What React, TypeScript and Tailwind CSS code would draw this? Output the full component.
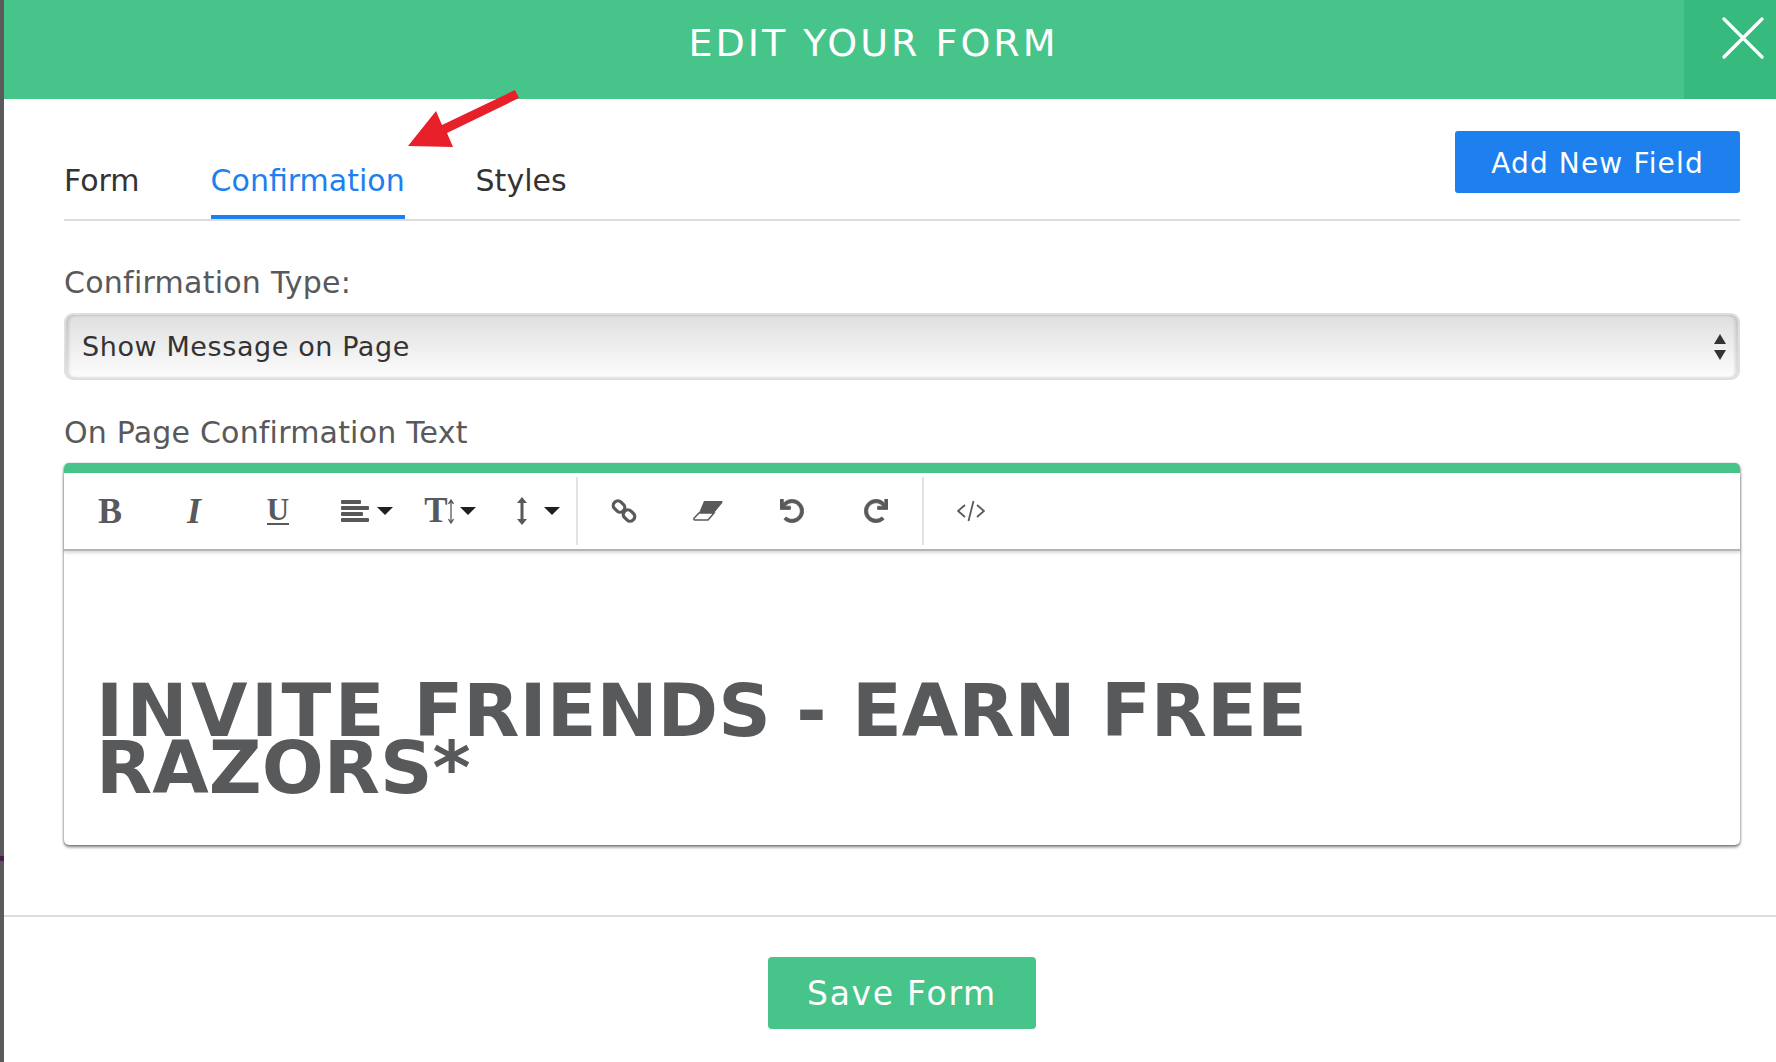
import { FaUndo, FaRedo } from "react-icons/fa";

const Caret = () => (
  <svg width="16" height="8" viewBox="0 0 16 8" className="shrink-0">
    <path d="M0 0h16L8 8z" fill="#1f1f1f" />
  </svg>
);

const ToolButton = ({ children, className = "" }: { children: React.ReactNode; className?: string }) => (
  <div className={`w-[84px] h-full flex items-center justify-center text-[#58595b] ${className}`}>{children}</div>
);

const Divider = ({ className = "" }: { className?: string }) => <div className={`w-[2px] h-[68px] bg-[#e3e3e3] ${className}`} />;

export default function App() {
  return (
    <div className="relative w-[1776px] h-[1062px] flex bg-white overflow-hidden font-['DejaVu_Sans',sans-serif]">
      <div className="relative w-1 shrink-0 bg-[#5a5a5c]">
        <div className="absolute left-0 top-[856px] w-1 h-[5px] bg-[#4a1d4a]" />
      </div>

      <div className="flex-1 min-w-0 flex flex-col">
        <header className="h-[99px] shrink-0 flex bg-[#47c489]">
          <h1 className="flex-1 pl-[59px] pt-[20px] text-center text-white text-[38px] leading-[46px] tracking-[3px]">
            EDIT YOUR FORM
          </h1>
          <button className="w-[92px] flex justify-center pt-[17px] pl-[26px] bg-[#36ba7e]">
            <svg width="42" height="42" viewBox="0 0 42 42">
              <path d="M2 2l38 38M40 2L2 40" stroke="#fff" strokeWidth="3.2" strokeLinecap="round" />
            </svg>
          </button>
        </header>

        <main className="flex-1 pl-[60px] pr-[36px]">
          <div className="h-[122px] flex justify-between border-b-2 border-[#dcdcdc]">
            <nav className="flex items-end gap-[71px] text-[30px] text-[#333]">
              <span className="pb-[16px] leading-[36px] border-b-4 border-transparent">Form</span>
              <span className="pb-[16px] leading-[36px] text-[#1e7fee] border-b-4 border-[#1e7fee] w-[194px]">Confirmation</span>
              <span className="pb-[16px] leading-[36px] border-b-4 border-transparent">Styles</span>
            </nav>
            <button className="mt-[32px] w-[285px] h-[62px] pt-[4px] rounded-[3px] bg-[#1e7fee] text-white text-[28px] tracking-[1.15px]">
              Add New Field
            </button>
          </div>

          <label className="block mt-[44px] text-[30px] leading-[36px] tracking-[0.25px] text-[#58595b]">Confirmation Type:</label>
          <div className="mt-[12px] h-[67px] flex items-center justify-between pl-[16px] pr-[11px] pt-[1px] rounded-[9px] border-2 border-[#dfdfdf] bg-gradient-to-b from-[#dfdfdf] to-[#fdfdfd] shadow-[inset_3px_0_3px_rgba(0,0,0,0.12),inset_-3px_0_3px_rgba(0,0,0,0.12)] text-[27px] tracking-[0.6px] text-[#333]">
            <span>Show Message on Page</span>
            <svg width="14" height="26" viewBox="0 0 14 26">
              <path d="M7 0l6 10H1zM7 26l6-10H1z" fill="#333" />
            </svg>
          </div>

          <label className="block mt-[35px] text-[30px] leading-[36px] tracking-[0.2px] text-[#58595b]">On Page Confirmation Text</label>
          <div className="mt-[12px] h-[382px] flex flex-col rounded-[5px] border-t-[10px] border-[#47c489] shadow-[0_1px_3px_rgba(0,0,0,0.55),0_3px_3px_rgba(0,0,0,0.2)]">
            <div className="h-[78px] shrink-0 flex items-center pl-[4px] border-b-2 border-[#b5b5b5] shadow-[0_2px_3px_rgba(0,0,0,0.15)]">
              <ToolButton className="font-['Liberation_Serif',serif] font-bold text-[36px]">B</ToolButton>
              <ToolButton className="font-['Liberation_Serif',serif] font-bold italic text-[36px]">I</ToolButton>
              <ToolButton className="font-['Liberation_Serif',serif] font-bold">
                <span className="text-[31px] leading-[26px] border-b-2 border-[#58595b]">U</span>
              </ToolButton>
              <ToolButton className="gap-[8px] pl-[10px]">
                <svg width="28" height="22" viewBox="0 0 28 22" fill="#58595b">
                  <rect x="0" y="0" width="20" height="4" rx="1" />
                  <rect x="0" y="6" width="28" height="4" rx="1" />
                  <rect x="0" y="12" width="22" height="4" rx="1" />
                  <rect x="0" y="18" width="28" height="4" rx="1" />
                </svg>
                <Caret />
              </ToolButton>
              <ToolButton className="gap-[6px] pl-[8px]">
                <span className="flex items-center">
                  <span className="font-['Liberation_Serif',serif] font-bold text-[35px] leading-[26px]">T</span>
                  <svg width="6" height="25" viewBox="0 0 6 25">
                    <path d="M3 1v23M0.500 5L3 1l2.500 4M0.500 20L3 24l2.500-4" fill="none" stroke="#58595b" strokeWidth="1.300" />
                  </svg>
                </span>
                <Caret />
              </ToolButton>
              <ToolButton className="gap-[17px] pl-[16px]">
                <svg width="10" height="28" viewBox="0 0 10 28">
                  <path d="M5 0l5 6H6.500v16H10l-5 6-5-6h3.500V6H0z" fill="#58595b" />
                </svg>
                <Caret />
              </ToolButton>
              <Divider className="ml-[4px]" />
              <ToolButton className="ml-[4px]">
                <svg width="26" height="26" viewBox="0 0 26 26" fill="none" stroke="#58595b" strokeWidth="3.200">
                  <rect x="2" y="4" width="12" height="9" rx="4" transform="rotate(45 8 8.500)" />
                  <rect x="12" y="13" width="12" height="9" rx="4" transform="rotate(45 18 17.500)" />
                </svg>
              </ToolButton>
              <ToolButton>
                <svg width="30" height="20" viewBox="0 0 30 20">
                  <path d="M11 0h17c1.500 0 2 1 1.200 2L21 12H6z" fill="#58595b" />
                  <path d="M6 12h15l-6 7H2c-1 0-1.500-1-.8-2z" fill="none" stroke="#58595b" strokeWidth="1.500" />
                </svg>
              </ToolButton>
              <ToolButton>
                <FaUndo size={24} stroke="currentColor" strokeWidth={16} />
              </ToolButton>
              <ToolButton>
                <FaRedo size={24} stroke="currentColor" strokeWidth={16} />
              </ToolButton>
              <Divider className="ml-[4px]" />
              <ToolButton className="pl-[10px]">
                <svg width="28" height="22" viewBox="0 0 28 22" fill="none" stroke="#58595b" strokeWidth="1.800">
                  <path d="M8 5l-7 6 7 6M20 5l7 6-7 6M16.500 1l-5 20" />
                </svg>
              </ToolButton>
            </div>
            <div className="flex-1 pl-[32px] pt-[131px] text-[#58595b] font-bold text-[73px] leading-[57px]">
              <span className="tracking-[3.400px]">INVITE</span> FRIENDS - EARN FREE
              <br />
              RAZORS*
            </div>
          </div>
        </main>

        <footer className="h-[147px] shrink-0 flex justify-center border-t-2 border-[#dcdcdc] pt-[40px]">
          <button className="w-[268px] h-[72px] ml-[24px] pt-[1px] rounded-[4px] bg-[#47c489] text-white text-[33px] tracking-[1.7px]">
            Save Form
          </button>
        </footer>
      </div>

      <svg className="absolute left-[405px] top-[88px]" width="118" height="62" viewBox="0 0 118 62">
        <path d="M3 58L31 23l6 14L110 2l4 8-72 35 6 14z" fill="#e8202a" />
      </svg>
    </div>
  );
}
